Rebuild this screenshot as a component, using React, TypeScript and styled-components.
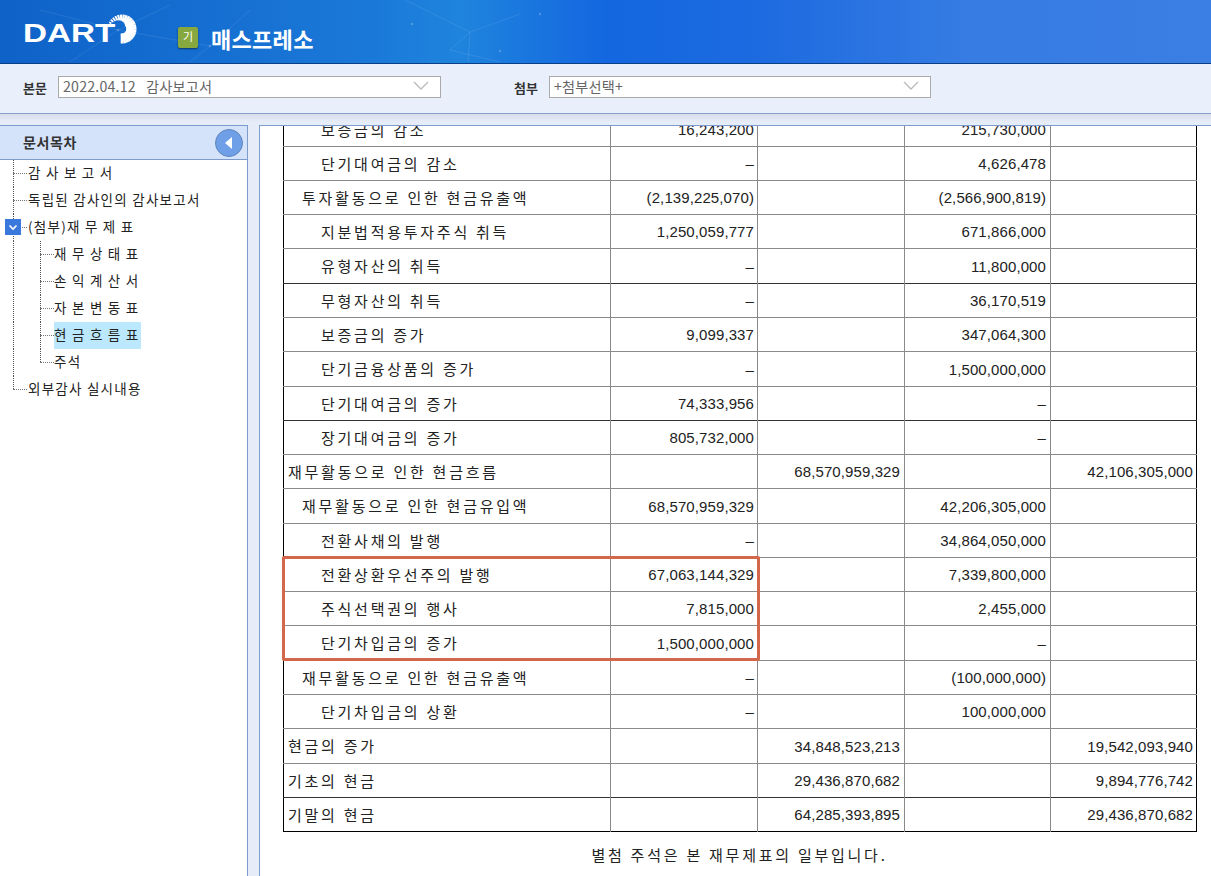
import React from 'react';
import styled, { createGlobalStyle } from 'styled-components';

const Global = createGlobalStyle`
  html, body { margin: 0; padding: 0; height: 100%; overflow: hidden; background: #e6ecf8; }
  body { font-family: "Noto Sans CJK KR", "Liberation Sans", sans-serif; color: #222; }
`;

const Page = styled.div`
  width: 1211px;
  height: 876px;
  display: flex;
  flex-direction: column;
  overflow: hidden;
`;

const Header = styled.header`
  position: relative;
  box-sizing: border-box;
  height: 64px;
  flex: none;
  display: flex;
  align-items: center;
  padding-top: 12px;
  overflow: hidden;
  border-bottom: 1px solid #0a3f86;
  background: linear-gradient(90deg, #0f62c8 0%, #1a78d8 30%, #1f84dd 38%, #1467e0 50%, #1c6ae0 62%, #367ce3 80%, #3b7ee4 100%);
`;

const Network = styled.svg`
  position: absolute;
  inset: 0;
`;

const Logo = styled.div`
  position: relative;
  flex: none;
  margin-left: 23px;
  margin-bottom: 17px;
  width: 155px;
  height: 30px;
  color: #fff;
  font: bold 25px/20px "Liberation Sans", sans-serif;
`;

const LogoWord = styled.span`
  position: absolute;
  left: 0;
  bottom: 1px;
  transform: scaleX(1.33);
  transform-origin: left center;
`;

const LogoRing = styled.svg`
  position: absolute;
  left: 84px;
  top: 0;
`;

const Kind = styled.span`
  position: relative;
  flex: none;
  width: 20px;
  height: 21px;
  border-radius: 2px;
  background: #86a83e;
  box-shadow: 0 1px 2px rgba(0, 0, 0, 0.5);
  color: #fff;
  font-size: 11px;
  line-height: 19px;
  text-align: center;
`;

const Company = styled.h1`
  position: relative;
  margin: 0 0 0 13px;
  color: #fff;
  font-size: 22px;
  font-weight: 700;
  letter-spacing: 0.3px;
  line-height: 26px;
`;

const Toolbar = styled.div`
  flex: none;
  box-sizing: border-box;
  height: 50px;
  padding-bottom: 3px;
  display: flex;
  align-items: center;
  background: #e9effb;
  border-bottom: 1px solid #86a0cc;
`;

const FieldLabel = styled.label<{ $left: number }>`
  flex: none;
  width: 26px;
  margin-left: ${p => p.$left}px;
  margin-right: 9px;
  font-size: 13px;
  font-weight: 700;
  white-space: nowrap;
  color: #333;
`;

const Select = styled.div<{ $w: number }>`
  position: relative;
  box-sizing: border-box;
  width: ${p => p.$w}px;
  height: 22px;
  padding-left: 4px;
  background: #fff;
  border: 1px solid #aaa;
  color: #666;
  font-size: 14.2px;
  letter-spacing: 0.2px;
  line-height: 18px;
  white-space: pre;
`;

const Chevron = styled.svg`
  position: absolute;
  right: 11px;
  top: 4px;
`;

const Body = styled.div`
  flex: 1;
  min-height: 0;
  display: flex;
  padding-top: 11px;
  background: linear-gradient(180deg, #d7deea 0, #e6ecf8 8px);
`;

const Sidebar = styled.aside`
  flex: none;
  box-sizing: border-box;
  width: 248px;
  background: #fff;
  border-top: 1px solid #7d9ccd;
  border-right: 1px solid #7d9ccd;
`;

const SideTitle = styled.div`
  position: relative;
  box-sizing: border-box;
  height: 34px;
  padding-left: 23px;
  background: #d5e3fa;
  border-bottom: 1px solid #7d9ccd;
  font-size: 14px;
  font-weight: 700;
  letter-spacing: 0.6px;
  line-height: 33px;
  color: #333;
`;

const Collapse = styled.button`
  position: absolute;
  right: 4px;
  top: 3px;
  box-sizing: border-box;
  width: 28px;
  height: 28px;
  padding: 0;
  border: 1px solid #5f86bd;
  border-radius: 50%;
  background: #6f9fe6;
  display: flex;
  align-items: center;
  justify-content: center;
`;

const Tree = styled.ul`
  position: relative;
  margin: 0;
  padding: 0;
  list-style: none;
`;

const TreeItem = styled.li<{ $level: number; $last?: boolean }>`
  position: relative;
  height: 27px;
  padding-left: ${p => (p.$level === 2 ? 54 : 28)}px;
  font-size: 13.5px;
  line-height: 25px;
  letter-spacing: 1.25px;
  white-space: pre;
  color: #222;
  &::before {
    content: '';
    position: absolute;
    left: ${p => (p.$level === 2 ? 40 : 13)}px;
    top: 0;
    height: ${p => (p.$last ? 13 : 27)}px;
    border-left: 1px dotted #555;
  }
  &::after {
    content: '';
    position: absolute;
    left: ${p => (p.$level === 2 ? 40 : 13)}px;
    top: 13px;
    width: 14px;
    border-top: 1px dotted #777;
  }
`;

const Trunk = styled.span`
  position: absolute;
  left: 13px;
  top: 0;
  height: 27px;
  border-left: 1px dotted #555;
`;

const Current = styled.span`
  display: inline-block;
  height: 27px;
  padding-right: 2px;
  background: #bce8fd;
  border-radius: 1px;
  line-height: 25px;
`;

const Toggle = styled.span`
  position: absolute;
  z-index: 1;
  left: 5px;
  top: 5px;
  width: 16px;
  height: 16px;
  background: #3a78dc;
  display: flex;
  align-items: center;
  justify-content: center;
`;

const Content = styled.main`
  flex: none;
  box-sizing: border-box;
  width: 952px;
  margin-left: 11px;
  background: #fff;
  border-top: 1px solid #7d9ccd;
  border-left: 1px solid #7d9ccd;
  overflow: hidden;
`;

const Doc = styled.div`
  position: relative;
  width: 913px;
  margin: -14px 0 0 23px;
`;

const Sheet = styled.table`
  width: 913px;
  table-layout: fixed;
  border-collapse: collapse;
  border-left: 1px solid #000;
  border-right: 1px solid #000;
  border-bottom: 1px solid #000;
`;

const Row = styled.tr<{ $h: number; $dark?: boolean }>`
  height: ${p => p.$h}px;
  border-top: 1px solid ${p => (p.$dark ? '#333' : '#8a8a8a')};
`;

const Label = styled.td<{ $level: number }>`
  box-sizing: border-box;
  padding: 0 0 0 ${p => [4, 18, 37][p.$level]}px;
  border-right: 1px solid #8a8a8a;
  font-size: 15px;
  letter-spacing: 2.75px;
  white-space: nowrap;
  color: #222;
  line-height: 20px;
`;

const Num = styled.td`
  box-sizing: border-box;
  padding: 0 3px 0 0;
  border-left: 1px solid #8a8a8a;
  text-align: right;
  font: 15px "Liberation Sans", sans-serif;
  letter-spacing: 0.1px;
  white-space: nowrap;
  color: #222;
  &:nth-child(3), &:nth-child(4) {
    padding-right: 4px;
  }
`;

const Mark = styled.div`
  position: absolute;
  left: -1px;
  top: 444px;
  box-sizing: border-box;
  width: 478px;
  height: 105px;
  border: 3px solid #d4664a;
  border-radius: 2px;
`;

const Note = styled.p`
  margin: 12px 0 0;
  text-align: center;
  font-size: 15px;
  letter-spacing: 2.75px;
  color: #222;
`;

type Line = { t: string; l: number; v: string[]; h: number; dark?: boolean };

const rows: Line[] = [
  { t: '보증금의 감소', l: 2, v: ['16,243,200', '', '215,730,000', ''], h: 34 },
  { t: '단기대여금의 감소', l: 2, v: ['–', '', '4,626,478', ''], h: 34 },
  { t: '투자활동으로 인한 현금유출액', l: 1, v: ['(2,139,225,070)', '', '(2,566,900,819)', ''], h: 34 },
  { t: '지분법적용투자주식 취득', l: 2, v: ['1,250,059,777', '', '671,866,000', ''], h: 34 },
  { t: '유형자산의 취득', l: 2, v: ['–', '', '11,800,000', ''], h: 35 },
  { t: '무형자산의 취득', l: 2, v: ['–', '', '36,170,519', ''], h: 34, dark: true },
  { t: '보증금의 증가', l: 2, v: ['9,099,337', '', '347,064,300', ''], h: 34 },
  { t: '단기금융상품의 증가', l: 2, v: ['–', '', '1,500,000,000', ''], h: 35 },
  { t: '단기대여금의 증가', l: 2, v: ['74,333,956', '', '–', ''], h: 34 },
  { t: '장기대여금의 증가', l: 2, v: ['805,732,000', '', '–', ''], h: 34, dark: true },
  { t: '재무활동으로 인한 현금흐름', l: 0, v: ['', '68,570,959,329', '', '42,106,305,000'], h: 34 },
  { t: '재무활동으로 인한 현금유입액', l: 1, v: ['68,570,959,329', '', '42,206,305,000', ''], h: 35 },
  { t: '전환사채의 발행', l: 2, v: ['–', '', '34,864,050,000', ''], h: 34 },
  { t: '전환상환우선주의 발행', l: 2, v: ['67,063,144,329', '', '7,339,800,000', ''], h: 34 },
  { t: '주식선택권의 행사', l: 2, v: ['7,815,000', '', '2,455,000', ''], h: 34 },
  { t: '단기차입금의 증가', l: 2, v: ['1,500,000,000', '', '–', ''], h: 35 },
  { t: '재무활동으로 인한 현금유출액', l: 1, v: ['–', '', '(100,000,000)', ''], h: 34 },
  { t: '단기차입금의 상환', l: 2, v: ['–', '', '100,000,000', ''], h: 34 },
  { t: '현금의 증가', l: 0, v: ['', '34,848,523,213', '', '19,542,093,940'], h: 35 },
  { t: '기초의 현금', l: 0, v: ['', '29,436,870,682', '', '9,894,776,742'], h: 34 },
  { t: '기말의 현금', l: 0, v: ['', '64,285,393,895', '', '29,436,870,682'], h: 34, dark: true },
];

// the logo's sunburst: short dashes at upper left growing to long wedges at lower right
const rays = Array.from({ length: 22 }, (_, i) => {
  const deg = -62 + i * 11.5;
  const inner = Math.max(4.5, 12 - i * 0.75);
  const rad = (deg * Math.PI) / 180;
  return {
    deg,
    x1: 15 + inner * Math.sin(rad),
    y1: 15 - inner * Math.cos(rad),
    x2: 15 + 14.5 * Math.sin(rad),
    y2: 15 - 14.5 * Math.cos(rad),
    w: 1.6 + Math.min(i, 10) * 0.12,
  };
});

export default function App() {
  return (
    <Page>
      <Global />
      <Header>
        <Network width="1211" height="63">
          <g stroke="#fff" strokeOpacity="0.09" fill="none">
            <path d="M40 10L118 30L170 5M118 30L70 62M118 30L210 46L250 10M210 46L190 62M405 0L470 32L520 14M470 32L468 62M470 32L450 50L500 62" />
          </g>
          <g fill="#fff" fillOpacity="0.22">
            <circle cx="118" cy="30" r="1.2" />
            <circle cx="210" cy="46" r="1.2" />
            <circle cx="412" cy="24" r="1.2" />
            <circle cx="500" cy="51" r="1.2" />
            <circle cx="540" cy="14" r="1.2" />
          </g>
        </Network>
        <Logo>
          <LogoRing width="30" height="30" viewBox="0 0 30 30">
            <g stroke="#fff">
              {rays.map(r => (
                <line key={r.deg} x1={r.x1} y1={r.y1} x2={r.x2} y2={r.y2} strokeWidth={r.w} />
              ))}
            </g>
          </LogoRing>
          <LogoWord>DART</LogoWord>
        </Logo>
        <Kind>기</Kind>
        <Company>매스프레소</Company>
      </Header>
      <Toolbar>
        <FieldLabel $left={23}>본문</FieldLabel>
        <Select $w={383}>
          2022.04.12{'   '}감사보고서
          <Chevron width="16" height="10" viewBox="0 0 16 10">
            <path d="M1 1l7 7 7-7" fill="none" stroke="#bbb" strokeWidth="1.4" />
          </Chevron>
        </Select>
        <FieldLabel $left={73}>첨부</FieldLabel>
        <Select $w={382}>
          +첨부선택+
          <Chevron width="16" height="10" viewBox="0 0 16 10">
            <path d="M1 1l7 7 7-7" fill="none" stroke="#bbb" strokeWidth="1.4" />
          </Chevron>
        </Select>
      </Toolbar>
      <Body>
        <Sidebar>
          <SideTitle>
            문서목차
            <Collapse aria-label="접기">
              <svg width="8" height="12" viewBox="0 0 8 12">
                <path d="M7 0v12L0 6z" fill="#fff" />
              </svg>
            </Collapse>
          </SideTitle>
          <Tree>
            <TreeItem $level={1}>감 사 보 고 서</TreeItem>
            <TreeItem $level={1}>독립된 감사인의 감사보고서</TreeItem>
            <TreeItem $level={1}>
              <Toggle>
                <svg width="10" height="7" viewBox="0 0 10 7">
                  <path d="M1.5 1.5L5 5l3.5-3.5" fill="none" stroke="#fff" strokeWidth="1.6" />
                </svg>
              </Toggle>
              (첨부)재 무 제 표
            </TreeItem>
            <TreeItem $level={2}><Trunk />재 무 상 태 표</TreeItem>
            <TreeItem $level={2}><Trunk />손 익 계 산 서</TreeItem>
            <TreeItem $level={2}><Trunk />자 본 변 동 표</TreeItem>
            <TreeItem $level={2}><Trunk /><Current>현 금 흐 름 표</Current></TreeItem>
            <TreeItem $level={2} $last><Trunk />주석</TreeItem>
            <TreeItem $level={1} $last>외부감사 실시내용</TreeItem>
          </Tree>
        </Sidebar>
        <Content>
          <Doc>
            <Sheet>
              <colgroup>
                <col style={{ width: 327 }} />
                <col style={{ width: 147 }} />
                <col style={{ width: 147 }} />
                <col style={{ width: 146 }} />
                <col style={{ width: 146 }} />
              </colgroup>
              <tbody>
                {rows.map(r => (
                  <Row key={r.t} $h={r.h} $dark={r.dark}>
                    <Label $level={r.l}>{r.t}</Label>
                    {r.v.map((n, i) => (
                      <Num key={i}>{n}</Num>
                    ))}
                  </Row>
                ))}
              </tbody>
            </Sheet>
            <Mark />
            <Note>별첨 주석은 본 재무제표의 일부입니다.</Note>
          </Doc>
        </Content>
      </Body>
    </Page>
  );
}
